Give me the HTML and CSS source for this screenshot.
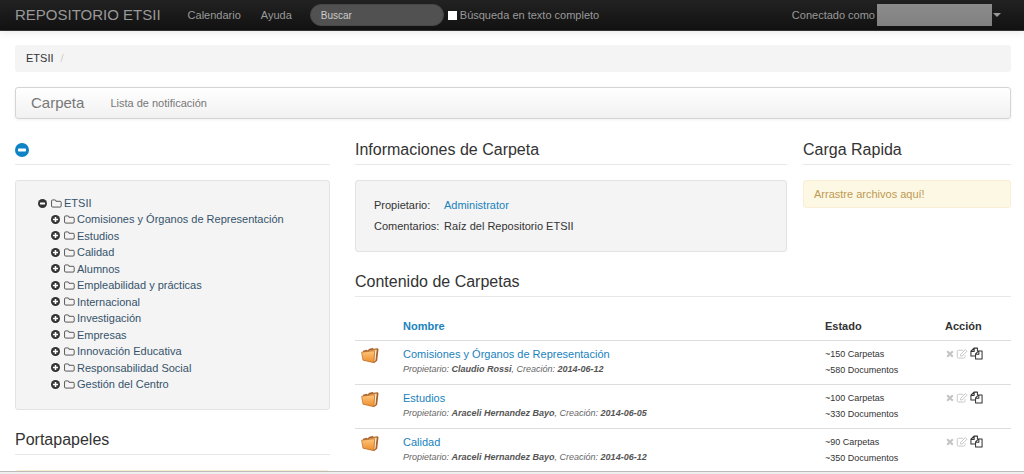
FILE: index.html
```html
<!DOCTYPE html>
<html lang="es">
<head>
<meta charset="utf-8">
<title>Repositorio ETSII</title>
<link rel="stylesheet" href="styles.css">
</head>
<body>
<svg class="sprite" aria-hidden="true">
  <linearGradient id="amber" x1="0" y1="0" x2="0" y2="1"><stop offset="0" stop-color="#ffc67c"/><stop offset="1" stop-color="#ee8d2b"/></linearGradient>
  <symbol id="minus" viewBox="0 0 14 14"><circle cx="7" cy="7" r="7"/><rect x="3" y="5.6" width="8" height="2.8" rx=".7" fill="#fff"/></symbol>
  <symbol id="plus" viewBox="0 0 14 14"><circle cx="7" cy="7" r="7"/><path d="M5.800 3h2.400v2.800H11v2.400H8.200V11H5.800V8.200H3V5.800h2.800z" fill="#fff"/></symbol>
  <symbol id="folder" viewBox="0 0 20 16"><path d="M1 3.500A2 2 0 0 1 3 1.500h4a2 2 0 0 1 2 2v.5h7.500a2 2 0 0 1 2 2v6.500a2 2 0 0 1-2 2H3a2 2 0 0 1-2-2z" fill="none" stroke="currentColor" stroke-width="1.600"/></symbol>
  <symbol id="remove" viewBox="0 0 10 10"><path d="M1.500 1.500l7 7M8.500 1.500l-7 7" fill="none" stroke="currentColor" stroke-width="2.600"/></symbol>
  <symbol id="edit" viewBox="0 0 14 12"><path d="M8.500 1.500H3A1.700 1.700 0 0 0 1.300 3.200v6A1.700 1.700 0 0 0 3 10.900h6a1.700 1.700 0 0 0 1.700-1.700V7.500" fill="none" stroke="currentColor" stroke-width="1.100"/><path d="M5.300 6.500L11 .8l1.900 1.900-5.700 5.700H5.300z" fill="none" stroke="currentColor" stroke-width="1.100"/></symbol>
  <symbol id="copy" viewBox="0 0 14 14"><path d="M5.500 9.800H1V4.500L4.300 1.200H8v3M4.500 1.200v3.500H1M6 12.800V7.300l3.200-3.100H13v8.600zM9.500 4.200v3.500H6" fill="none" stroke="currentColor" stroke-width="1.100" stroke-linejoin="round"/></symbol>
  <symbol id="files" viewBox="0 0 18 17">
    <path d="M2 3.800L5.500 2.800l.8.700L8.500 1.800l3-.8 1 .7 4.300-.4.700.9-1.300 11.500-2.600 2L3 13z" fill="#a8632a"/>
    <path d="M8 3.600l7.500-1.400-1.300 11.500-2 .8z" fill="#e9a25a"/>
    <path d="M13.600 4l2-1.200-1.200 10.800-1.300 1z" fill="#fff1dc"/>
    <path d="M.6 5.200l11.600-1.400 1.500.6-.9 11.300-10.800-2.500z" fill="url(#amber)" stroke="#b86d29" stroke-width=".7" stroke-linejoin="round"/>
  </symbol>
</svg>

<header class="topbar">
  <a class="topbar-brand" href="#">REPOSITORIO ETSII</a>
  <nav class="topbar-nav">
    <a href="#">Calendario</a>
    <a href="#">Ayuda</a>
  </nav>
  <form class="search">
    <input class="search-box" type="search" placeholder="Buscar" aria-label="Buscar">
    <input class="search-check" type="checkbox" id="fulltext">
    <label for="fulltext">Búsqueda en texto completo</label>
  </form>
  <button class="user" type="button">Conectado como <span class="user-name"></span><span class="caret"></span></button>
</header>

<main class="page">
  <nav class="breadcrumb"><a href="#">ETSII</a><span>/</span></nav>
  <nav class="subnav">
    <a class="subnav-brand" href="#">Carpeta</a>
    <a href="#">Lista de notificación</a>
  </nav>

  <div class="columns">
    <aside>
      <div class="heading"><button class="collapse" type="button" aria-label="Contraer"><svg><use href="#minus"/></svg></button></div>
      <div class="well tree-well">
        <ul class="tree">
          <li><a href="#"><svg class="toggle"><use href="#minus"/></svg><svg class="folder"><use href="#folder"/></svg>ETSII</a>
            <ul>
              <li><a href="#"><svg class="toggle"><use href="#plus"/></svg><svg class="folder"><use href="#folder"/></svg>Comisiones y Órganos de Representación</a></li>
              <li><a href="#"><svg class="toggle"><use href="#plus"/></svg><svg class="folder"><use href="#folder"/></svg>Estudios</a></li>
              <li><a href="#"><svg class="toggle"><use href="#plus"/></svg><svg class="folder"><use href="#folder"/></svg>Calidad</a></li>
              <li><a href="#"><svg class="toggle"><use href="#plus"/></svg><svg class="folder"><use href="#folder"/></svg>Alumnos</a></li>
              <li><a href="#"><svg class="toggle"><use href="#plus"/></svg><svg class="folder"><use href="#folder"/></svg>Empleabilidad y prácticas</a></li>
              <li><a href="#"><svg class="toggle"><use href="#plus"/></svg><svg class="folder"><use href="#folder"/></svg>Internacional</a></li>
              <li><a href="#"><svg class="toggle"><use href="#plus"/></svg><svg class="folder"><use href="#folder"/></svg>Investigación</a></li>
              <li><a href="#"><svg class="toggle"><use href="#plus"/></svg><svg class="folder"><use href="#folder"/></svg>Empresas</a></li>
              <li><a href="#"><svg class="toggle"><use href="#plus"/></svg><svg class="folder"><use href="#folder"/></svg>Innovación Educativa</a></li>
              <li><a href="#"><svg class="toggle"><use href="#plus"/></svg><svg class="folder"><use href="#folder"/></svg>Responsabilidad Social</a></li>
              <li><a href="#"><svg class="toggle"><use href="#plus"/></svg><svg class="folder"><use href="#folder"/></svg>Gestión del Centro</a></li>
            </ul>
          </li>
        </ul>
      </div>
      <h2 class="heading">Portapapeles</h2>
      <div class="alert"></div>
    </aside>

    <div>
      <div class="summary">
        <section>
          <h2 class="heading">Informaciones de Carpeta</h2>
          <div class="well info">
            <dl>
              <dt>Propietario:</dt><dd><a href="#">Administrator</a></dd>
              <dt>Comentarios:</dt><dd>Raíz del Repositorio ETSII</dd>
            </dl>
          </div>
        </section>
        <section>
          <h2 class="heading">Carga Rapida</h2>
          <div class="alert">Arrastre archivos aquí!</div>
        </section>
      </div>

      <h2 class="heading">Contenido de Carpetas</h2>
      <table class="folders">
        <thead>
          <tr><th class="col-icon"></th><th><a href="#">Nombre</a></th><th class="col-state">Estado</th><th class="col-action">Acción</th></tr>
        </thead>
        <tbody>
          <tr>
            <td class="col-icon"><svg class="files"><use href="#files"/></svg></td>
            <td><a href="#">Comisiones y Órganos de Representación</a><p class="meta">Propietario: <b>Claudio Rossi</b>, Creación: <b>2014-06-12</b></p></td>
            <td class="state">~150 Carpetas<br>~580 Documentos</td>
            <td><div class="actions"><svg class="remove"><use href="#remove"/></svg><svg class="edit"><use href="#edit"/></svg><button type="button" aria-label="Copiar"><svg><use href="#copy"/></svg></button></div></td>
          </tr>
          <tr>
            <td class="col-icon"><svg class="files"><use href="#files"/></svg></td>
            <td><a href="#">Estudios</a><p class="meta">Propietario: <b>Araceli Hernandez Bayo</b>, Creación: <b>2014-06-05</b></p></td>
            <td class="state">~100 Carpetas<br>~330 Documentos</td>
            <td><div class="actions"><svg class="remove"><use href="#remove"/></svg><svg class="edit"><use href="#edit"/></svg><button type="button" aria-label="Copiar"><svg><use href="#copy"/></svg></button></div></td>
          </tr>
          <tr>
            <td class="col-icon"><svg class="files"><use href="#files"/></svg></td>
            <td><a href="#">Calidad</a><p class="meta">Propietario: <b>Araceli Hernandez Bayo</b>, Creación: <b>2014-06-12</b></p></td>
            <td class="state">~90 Carpetas<br>~350 Documentos</td>
            <td><div class="actions"><svg class="remove"><use href="#remove"/></svg><svg class="edit"><use href="#edit"/></svg><button type="button" aria-label="Copiar"><svg><use href="#copy"/></svg></button></div></td>
          </tr>
        </tbody>
      </table>
    </div>
  </div>
</main>
<div class="edge"></div>
</body>
</html>
```

FILE: styles.css
```css
* { box-sizing: border-box; }

body {
  display: flex;
  flex-direction: column;
  height: 100vh;
  margin: 0;
  overflow: hidden;
  background: #fff;
  color: #333;
  font: 11px/16px "Liberation Sans", Arial, sans-serif;
}

a { color: #1a82bd; text-decoration: none; }
button { padding: 0; border: 0; background: none; color: inherit; font: inherit; }
svg { display: block; flex: none; fill: currentColor; }
.sprite { position: absolute; width: 0; height: 0; }

.topbar {
  display: flex;
  flex: none;
  align-items: center;
  height: 31px;
  padding: 0 23px 0 15px;
  border-bottom: 1px solid #333;
  background: linear-gradient(#222, #111);
  box-shadow: 0 1px 8px rgba(0, 0, 0, 0.1);
  color: #999;
}
.topbar a { color: #999; }
.topbar-brand { font-size: 15px; }
.topbar-nav { display: flex; gap: 20px; margin-left: 27px; }
.search { display: flex; align-items: center; margin-left: 18px; }
.search-box {
  width: 134px;
  height: 22px;
  padding: 0 10px;
  border: 1px solid #484848;
  border-radius: 11px;
  background: #515151;
  color: #ccc;
  font: 10px/16px "Liberation Sans", Arial, sans-serif;
  appearance: none;
}
.search-box::placeholder { color: #ccc; opacity: 1; }
.search-check {
  width: 9px;
  height: 9px;
  margin: 0 3px 0 4px;
  background: #fff;
  appearance: none;
}
.search-check:checked { background: #0088cc; }
.user { display: flex; align-items: center; margin-left: auto; }
.user-name {
  width: 115px;
  height: 22px;
  margin: 0 1px 0 2px;
  background: linear-gradient(#8c8c8c, #808080);
}
.caret { border: 4px solid transparent; border-top-color: #999; border-bottom: 0; }

.page { flex: 1; min-height: 0; padding: 14px 13px 0 15px; overflow: hidden; }

.breadcrumb {
  display: flex;
  gap: 7px;
  padding: 5px 11px 6px;
  margin-bottom: 15px;
  border-radius: 3px;
  background: #f4f4f4;
  color: #ccc;
}
.breadcrumb a { color: #333; }

.subnav {
  display: flex;
  align-items: center;
  gap: 26px;
  height: 32px;
  padding: 0 15px;
  margin-bottom: 16px;
  border: 1px solid #d4d4d4;
  border-radius: 3px;
  background: linear-gradient(#fff, #f1f1f1);
  box-shadow: 0 1px 3px rgba(0, 0, 0, 0.06);
}
.subnav a { color: #777; }
.subnav .subnav-brand { font-size: 15px; }

.columns { display: grid; grid-template-columns: 315fr 656fr; gap: 25px; }
.summary { display: grid; grid-template-columns: 432fr 208fr; gap: 16px; }

.heading {
  display: flex;
  align-items: center;
  height: 30px;
  margin: 0 0 15px;
  border-bottom: 1px solid #e8e8e8;
  font-size: 16px;
  font-weight: normal;
}
.collapse { color: #0d82c4; }
.collapse svg { width: 14px; height: 14px; }

.well {
  margin-bottom: 15px;
  border: 1px solid #e3e3e3;
  border-radius: 3px;
  background: #f4f4f4;
}
.tree-well { padding: 14px 22px 16px; }
.tree, .tree ul { display: grid; grid-auto-rows: 1fr; margin: 0; padding: 0; list-style: none; }
.tree ul { min-height: 182px; padding-left: 13px; }
.tree a { display: flex; align-items: center; color: #34536b; }
.toggle { width: 9px; height: 9px; margin-right: 4px; color: #333; }
.folder { width: 11px; height: 9px; margin-right: 2px; color: #444; }

.info { padding: 14px 18px 15px; }
.info dl { display: grid; grid-template-columns: 70px 1fr; row-gap: 5px; margin: 0; padding: 2px 0; }
.info dd { margin: 0; }

.alert {
  min-height: 28px;
  padding: 5px 10px;
  border: 1px solid #fbeed5;
  border-radius: 3px;
  background: #fcf8e3;
  color: #c09853;
}

.folders { width: 100%; border-collapse: collapse; table-layout: fixed; }
.folders th { height: 28px; padding: 0; text-align: left; }
.folders td { height: 44px; padding: 5px 0; border-top: 1px solid #ddd; vertical-align: top; }
.col-icon { width: 48px; }
.col-state { width: 120px; }
.col-action { width: 66px; }
.files { width: 18px; height: 17px; margin: 1px 0 0 6px; }
.meta { margin: 0; color: #666; font-size: 9px; line-height: 15px; font-style: italic; }
.meta b { color: #555; }
.state { font-size: 9px; }
.actions { display: flex; align-items: center; gap: 2px; height: 16px; padding-left: 1px; color: #c4c4c4; }
.actions button { color: #333; }
.actions button svg { width: 13px; height: 13px; }
.remove { width: 8px; height: 8px; }
.edit { width: 12px; height: 10px; }

.edge { flex: none; height: 3px; border-top: 1px solid #bbb; background: #eee; }
```
